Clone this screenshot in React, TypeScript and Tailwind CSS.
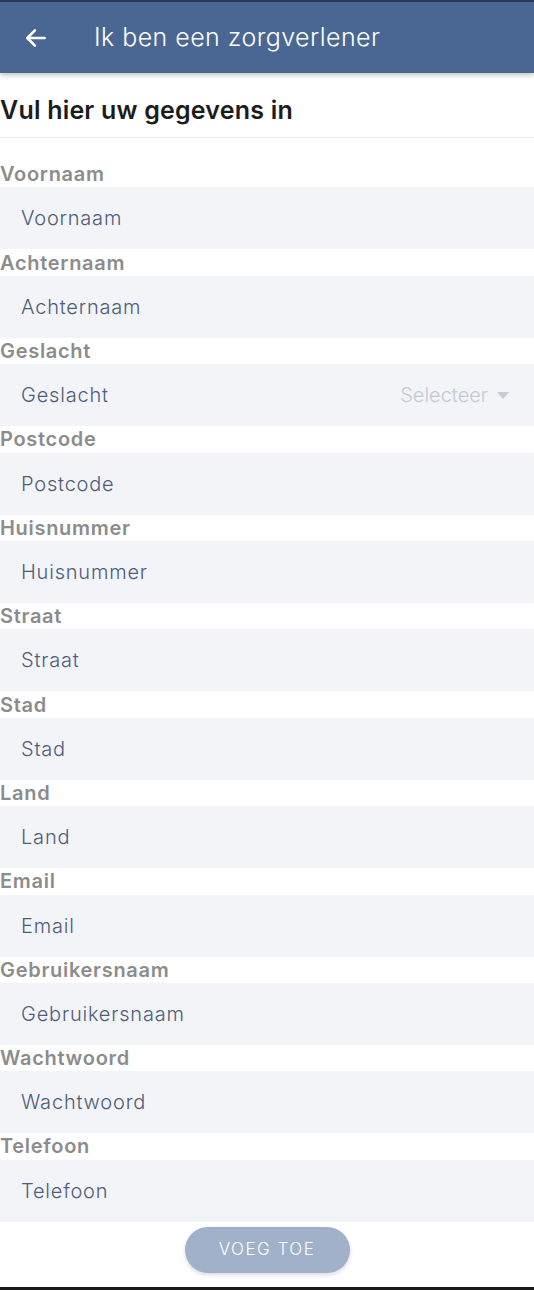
import React from 'react';

const fields = [
  'Voornaam',
  'Achternaam',
  'Geslacht',
  'Postcode',
  'Huisnummer',
  'Straat',
  'Stad',
  'Land',
  'Email',
  'Gebruikersnaam',
  'Wachtwoord',
  'Telefoon',
];

const BackArrow = () => (
  <svg width="26" height="26" viewBox="0 0 24 24" fill="none" stroke="white" strokeWidth="2.4" strokeLinecap="round" strokeLinejoin="round">
    <path d="M20 12H4" />
    <path d="M11 5l-7 7 7 7" />
  </svg>
);

const App: React.FC = () => {
  return (
    <div className="w-[534px] h-[1290px] bg-white flex flex-col overflow-hidden font-['Inter',sans-serif]">
      <div className="h-[2px] bg-[#2c3b57]" />
      <header className="h-[71px] bg-[#4a6794] flex items-center shadow-[0_2px_5px_rgba(0,0,0,0.25)] z-10">
        <div className="w-[94px] pl-[23px] flex items-center">
          <BackArrow />
        </div>
        <h1 className="text-white text-[25px] font-light tracking-[0.45px]">Ik ben een zorgverlener</h1>
      </header>

      <div className="h-[65px] flex items-center pt-[11px] border-b border-[#ececec]">
        <h2 className="text-[#1c1c1c] text-[25px] font-semibold tracking-[0.2px]">Vul hier uw gegevens in</h2>
      </div>

      <form className="flex flex-col pt-[23px]">
        {fields.map((f) => (
          <div key={f} className="flex flex-col">
            <label className="h-[26.4px] flex items-center text-[20px] font-semibold text-[#8c8c8c] leading-none tracking-[0.7px]">{f}</label>
            <div className="h-[62px] bg-[#f2f4f8] flex items-center pl-[21px] pr-[25px]">
              <span className="text-[20px] text-[#4d5c7a] font-light flex-1 tracking-[0.8px]">{f}</span>
              {f === 'Geslacht' && (
                <span className="flex items-center gap-[9px] text-[20px] font-light text-[#c4c9d4]">
                  Selecteer
                  <svg width="12" height="7" viewBox="0 0 12 7">
                    <path d="M0 0h12L6 7z" fill="#c4c9d4" />
                  </svg>
                </span>
              )}
            </div>
          </div>
        ))}
      </form>

      <div className="flex justify-center pt-[5px]">
        <button className="w-[165px] h-[46px] rounded-full bg-[#a1b1c9] text-white text-[17px] font-light tracking-[1.5px] shadow-[0_2px_4px_rgba(0,0,0,0.15)]">
          VOEG TOE
        </button>
      </div>

      <div className="flex-1" />
      <div className="h-[3px] bg-[#1a1a1a]" />
    </div>
  );
};

export default App;
